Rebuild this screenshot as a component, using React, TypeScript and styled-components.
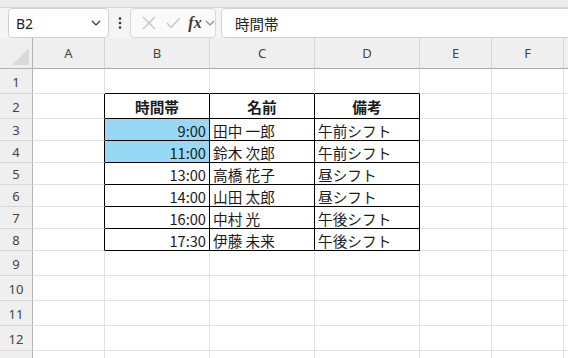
import React from "react";
import styled, { createGlobalStyle } from "styled-components";

const GlobalStyle = createGlobalStyle`
  html, body { margin: 0; padding: 0; background: #ffffff; overflow: hidden; }
  * { box-sizing: border-box; }
`;

const Window = styled.div`
  width: 568px;
  height: 358px;
  overflow: hidden;
  display: flex;
  flex-direction: column;
  background: #ffffff;
  font-family: "Noto Sans", "Noto Sans CJK JP", sans-serif;
`;

const TopStrip = styled.div`
  height: 8px;
  flex: none;
  background: #ebebeb;
  border-bottom: 1px solid #d4d4d4;
`;

const FormulaBar = styled.div`
  height: 30px;
  flex: none;
  display: flex;
  align-items: stretch;
  padding-left: 8px;
  background: #f5f5f5;
`;

const NameBox = styled.div`
  width: 101px;
  display: flex;
  align-items: center;
  justify-content: space-between;
  padding: 0 7px 0 7px;
  background: #ffffff;
  border: 1px solid #d2d2d2;
  border-radius: 4px;
  font-family: "Noto Sans", sans-serif;
  font-size: 14px;
  color: #222222;
`;

const Dots = styled.div`
  width: 21px;
  display: flex;
  align-items: center;
  justify-content: center;
`;

const FxGroup = styled.div`
  width: 86px;
  display: flex;
  align-items: center;
  padding-left: 6px;
  background: #fafafa;
  border: 1px solid #d8d8d8;
  border-radius: 4px;
`;

const IconSlot = styled.span<{ $w: number }>`
  width: ${(p) => p.$w}px;
  display: flex;
  align-items: center;
  justify-content: center;
`;

const Fx = styled.span`
  font-family: "Liberation Serif", serif;
  font-style: italic;
  font-weight: bold;
  font-size: 16px;
  color: #3a3a3a;
  width: 20px;
  text-align: center;
`;

const FormulaInput = styled.div`
  flex: 1;
  margin-left: 5px;
  margin-right: -10px;
  display: flex;
  align-items: center;
  padding-left: 13px;
  background: #ffffff;
  border: 1px solid #d2d2d2;
  border-radius: 4px 0 0 4px;
  font-family: "Noto Sans CJK JP", sans-serif;
  font-size: 14.5px;
  color: #222222;
`;

const Sheet = styled.div`
  flex: none;
  display: grid;
  grid-template-columns: 33px 72px 105px 105px 105px 72px 72px 72px;
  grid-template-rows: 31px 25px 25px repeat(6, 22px) repeat(5, 25px);
  width: 636px;
`;

const Corner = styled.div`
  background: #efefef;
  border-right: 1px solid #b4b4b4;
  border-bottom: 1px solid #b4b4b4;
  display: flex;
  align-items: flex-end;
  justify-content: flex-end;
  padding: 0 3px 3px 0;
`;

const ColHeader = styled.div`
  background: #efefef;
  border-right: 1px solid #d6d6d6;
  border-bottom: 1px solid #ababab;
  display: flex;
  align-items: center;
  justify-content: center;
  font-family: "Noto Sans", sans-serif;
  font-size: 13px;
  color: #444444;
`;

const RowHeader = styled.div`
  background: #efefef;
  border-right: 1px solid #b4b4b4;
  border-bottom: 1px solid #d6d6d6;
  display: flex;
  align-items: center;
  justify-content: center;
  font-family: "Noto Sans", sans-serif;
  font-size: 13px;
  color: #444444;
  padding-top: 1px;
`;

const Cell = styled.div<{
  $align?: "left" | "right" | "center";
  $bold?: boolean;
  $fill?: string;
  $rb?: boolean;
  $bb?: boolean;
}>`
  display: flex;
  align-items: center;
  justify-content: ${(p) =>
    p.$align === "right" ? "flex-end" : p.$align === "center" ? "center" : "flex-start"};
  padding: 1px 3px 0 3px;
  background: ${(p) => p.$fill || "#ffffff"};
  border-right: 1px solid ${(p) => (p.$rb ? "#000000" : "#e1e1e1")};
  border-bottom: 1px solid ${(p) => (p.$bb ? "#000000" : "#e1e1e1")};
  font-family: "Noto Sans CJK JP", sans-serif;
  font-size: 14.67px;
  font-weight: ${(p) => (p.$bold ? 700 : 400)};
  color: #1a1a1a;
  white-space: pre;
  overflow: hidden;
`;

const Chevron = ({ color = "#444" }: { color?: string }) => (
  <svg width="10" height="6" viewBox="0 0 10 6">
    <polyline points="1,1 5,5 9,1" fill="none" stroke={color} strokeWidth="1.2" />
  </svg>
);

const columns = ["A", "B", "C", "D", "E", "F", ""];

type Row = { b: string; c: string; d: string; fill?: boolean; head?: boolean };

const data: Record<number, Row> = {
  2: { b: "時間帯", c: "名前", d: "備考", head: true },
  3: { b: "9:00", c: "田中 一郎", d: "午前シフト", fill: true },
  4: { b: "11:00", c: "鈴木 次郎", d: "午前シフト", fill: true },
  5: { b: "13:00", c: "高橋 花子", d: "昼シフト" },
  6: { b: "14:00", c: "山田 太郎", d: "昼シフト" },
  7: { b: "16:00", c: "中村 光", d: "午後シフト" },
  8: { b: "17:30", c: "伊藤 未来", d: "午後シフト" },
};

const FILL = "#97d9f5";

export default function App() {
  const rows = Array.from({ length: 13 }, (_, i) => i + 1);
  return (
    <Window>
      <GlobalStyle />
      <TopStrip />
      <FormulaBar>
        <NameBox>
          <span>B2</span>
          <Chevron color="#333" />
        </NameBox>
        <Dots>
          <svg width="4" height="12" viewBox="0 0 4 12">
            <circle cx="2" cy="1.5" r="1.3" fill="#333" />
            <circle cx="2" cy="6" r="1.3" fill="#333" />
            <circle cx="2" cy="10.5" r="1.3" fill="#333" />
          </svg>
        </Dots>
        <FxGroup>
          <IconSlot $w={24}>
            <svg width="14" height="14" viewBox="0 0 14 14">
              <path d="M1 1 L13 13 M13 1 L1 13" stroke="#c4c4c4" strokeWidth="1.2" fill="none" />
            </svg>
          </IconSlot>
          <IconSlot $w={24}>
            <svg width="15" height="12" viewBox="0 0 15 12">
              <polyline points="1,6 5,10.5 14,1" stroke="#c4c4c4" strokeWidth="1.2" fill="none" />
            </svg>
          </IconSlot>
          <Fx>fx</Fx>
          <IconSlot $w={10}>
            <Chevron color="#8a8a8a" />
          </IconSlot>
        </FxGroup>
        <FormulaInput>時間帯</FormulaInput>
      </FormulaBar>
      <Sheet>
        <Corner>
          <svg width="17" height="17" viewBox="0 0 17 17">
            <polygon points="17,0 17,17 0,17" fill="#d9d9d9" />
          </svg>
        </Corner>
        {columns.map((c, i) => (
          <ColHeader key={i}>{c}</ColHeader>
        ))}
        {rows.map((r) => {
          const row = data[r];
          const inTable = r >= 2 && r <= 8;
          return (
            <React.Fragment key={r}>
              <RowHeader>{r <= 12 ? r : ""}</RowHeader>
              <Cell $rb={inTable} />
              <Cell
                $align={row?.head ? "center" : "right"}
                $bold={row?.head}
                $fill={row?.fill ? FILL : undefined}
                $rb={inTable}
                $bb={inTable || r === 1}
              >
                {row?.b}
              </Cell>
              <Cell
                $align={row?.head ? "center" : "left"}
                $bold={row?.head}
                $rb={inTable}
                $bb={inTable || r === 1}
              >
                {row?.c}
              </Cell>
              <Cell
                $align={row?.head ? "center" : "left"}
                $bold={row?.head}
                $rb={inTable}
                $bb={inTable || r === 1}
              >
                {row?.d}
              </Cell>
              <Cell />
              <Cell />
              <Cell />
            </React.Fragment>
          );
        })}
      </Sheet>
    </Window>
  );
}
